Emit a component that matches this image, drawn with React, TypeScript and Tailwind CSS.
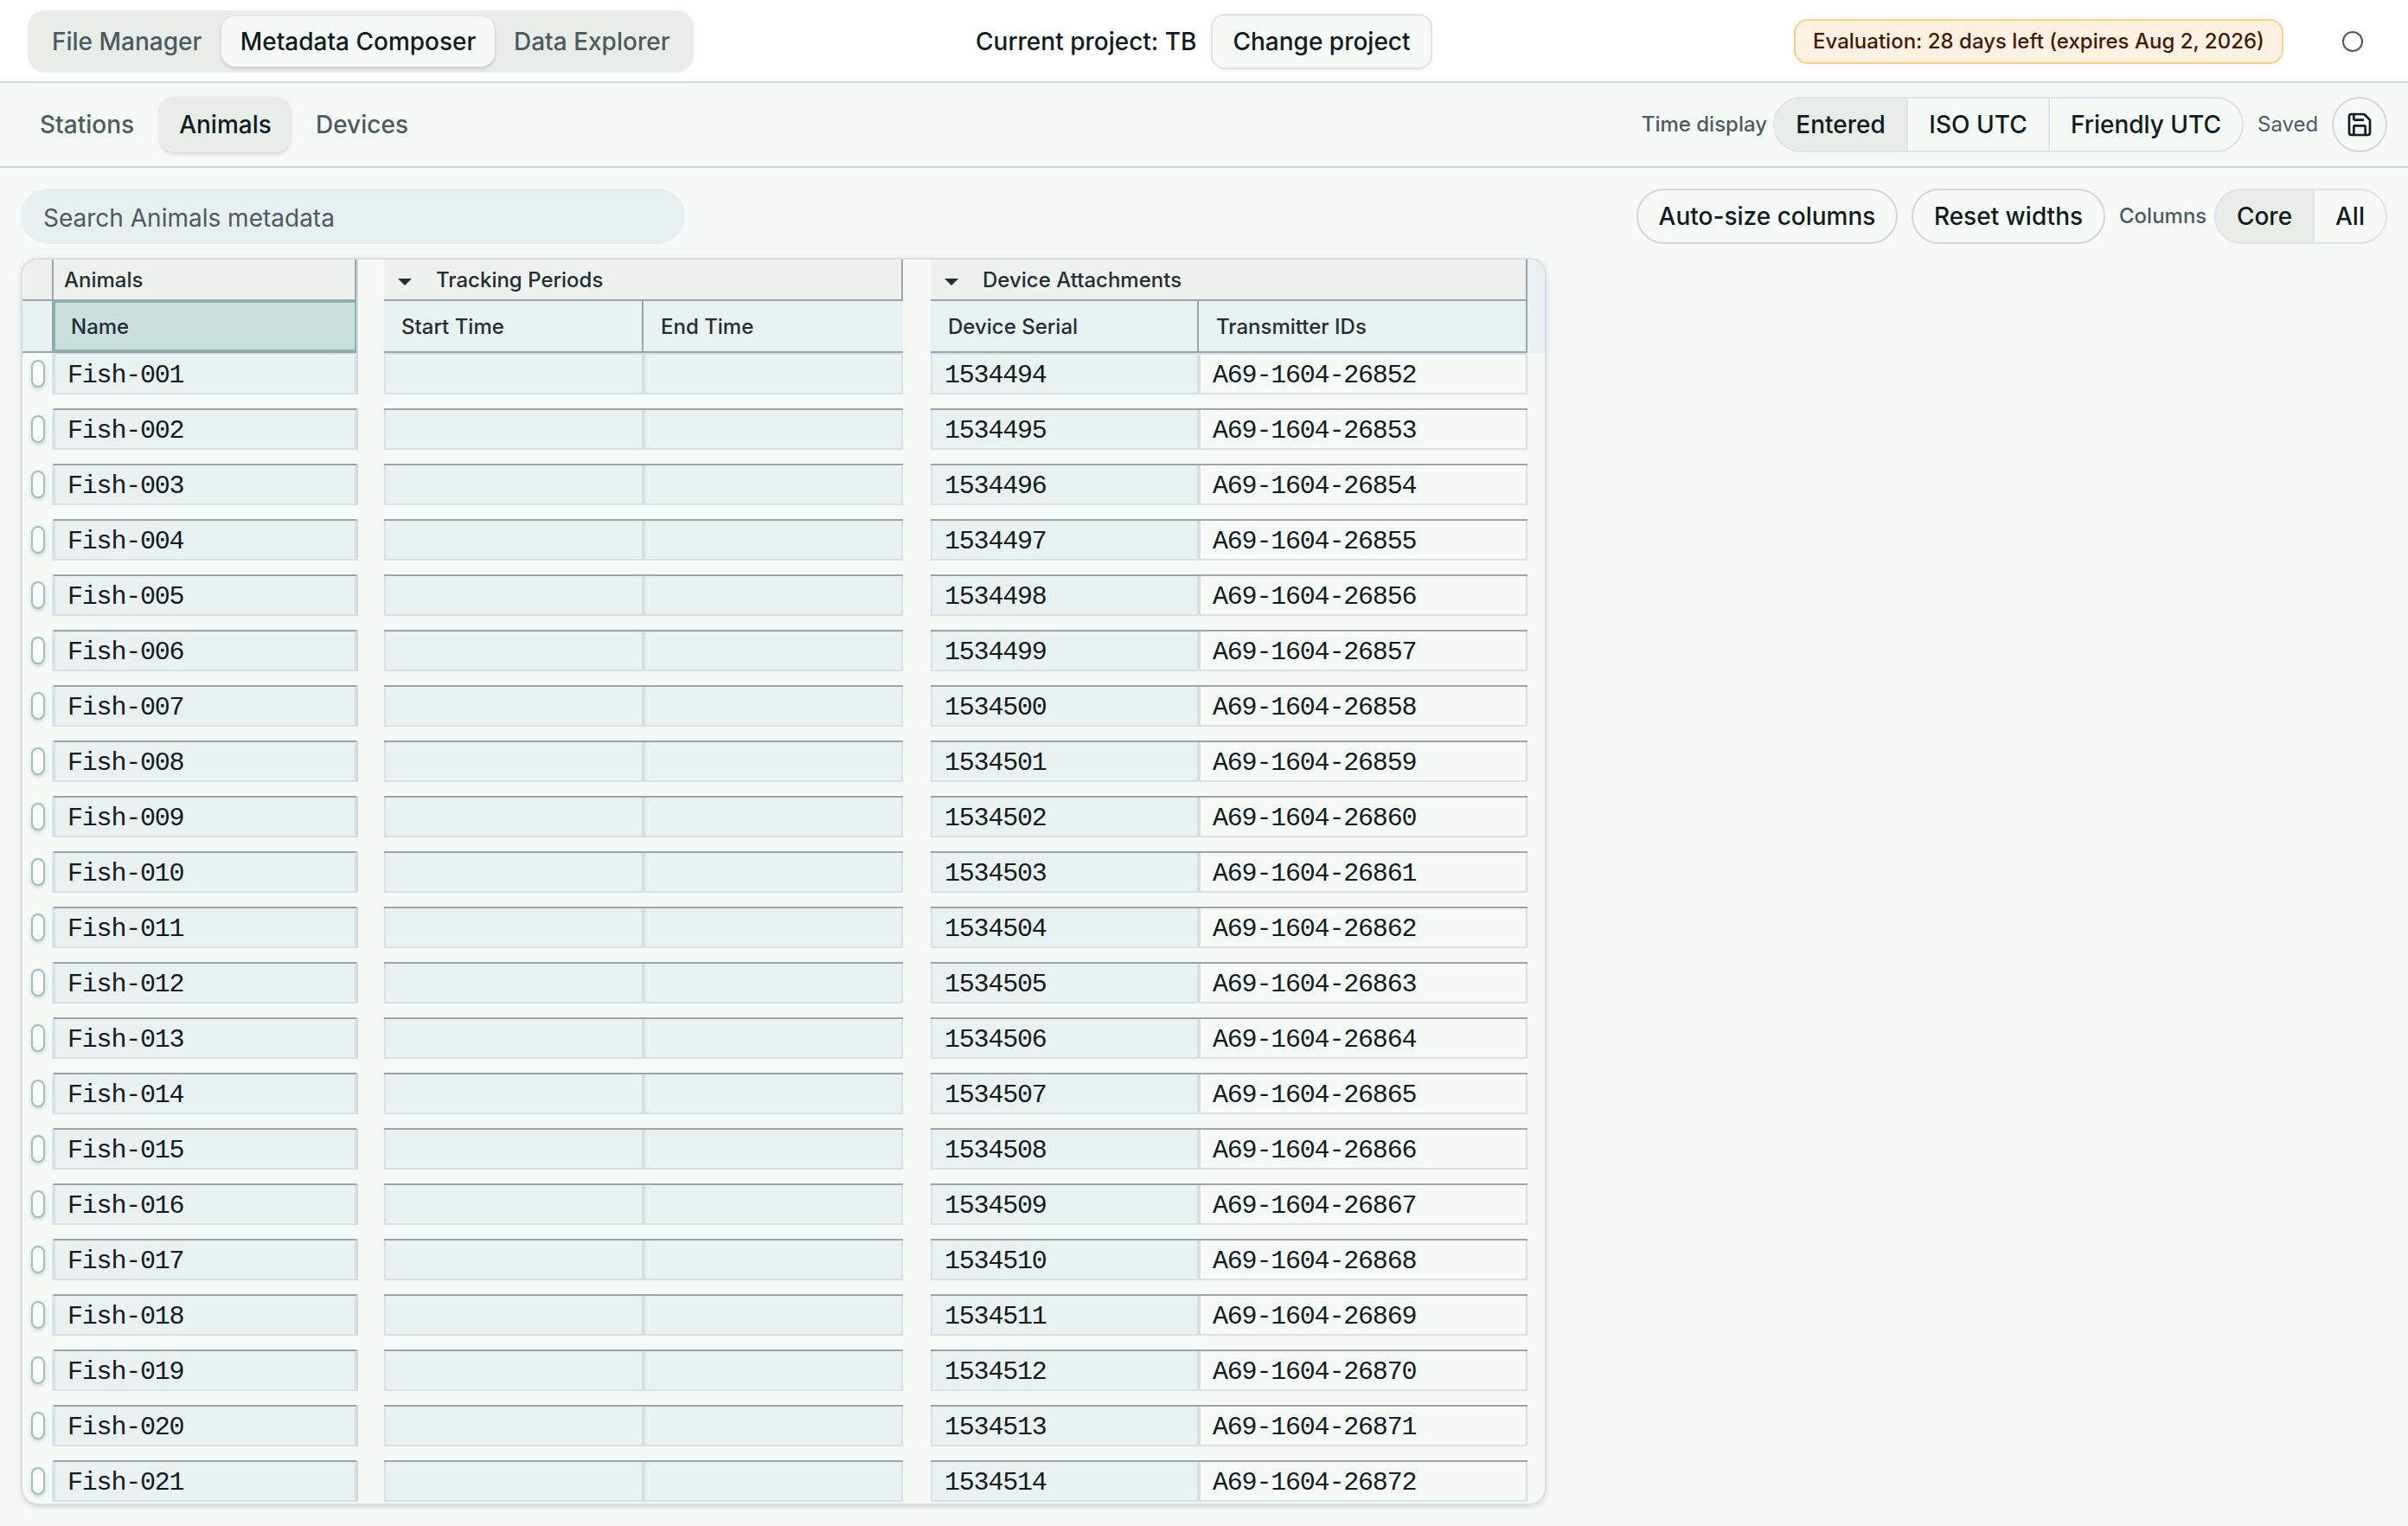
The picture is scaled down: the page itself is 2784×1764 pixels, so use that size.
import React from "react";
import { Save } from "lucide-react";

const rows = Array.from({ length: 21 }, (_, i) => ({
  name: `Fish-${String(i + 1).padStart(3, "0")}`,
  serial: String(1534494 + i),
  transmitter: `A69-1604-${26852 + i}`,
}));

function Cell({ first, plain, width, children }: { first: boolean; plain?: boolean; width: string; children?: React.ReactNode }) {
  return (
    <div className={`flex h-12 shrink-0 flex-col border-t-2 ${width} ${first ? "border-[#d6e0e6]" : "border-[#9ba4aa]"}`}>
      <div className={`flex flex-1 items-center border-x-2 border-b-2 border-[#d6e0e6] pt-[3px] pl-3.5 leading-none ${plain ? "" : "bg-[#e9f1f1]"}`}>
        {children}
      </div>
    </div>
  );
}

function Row({ row, first }: { row: (typeof rows)[number]; first: boolean }) {
  return (
    <div className="flex h-12 shrink-0">
      <div className="flex w-9 shrink-0 items-center border-r-2 border-[#dbe4e8] pl-2.5">
        <span className="h-8 w-4 rounded-full border-2 border-[#9ac1c0] bg-[#fafdfa] shadow-[0_2px_4px_rgba(0,0,0,0.16)]" />
      </div>
      <Cell first={first} width="w-[350px]">{row.name}</Cell>
      <div className="w-8 shrink-0 border-l-2 border-[#cfd8df]" />
      <Cell first={first} width="w-[300px]" />
      <Cell first={first} width="w-[300px]" />
      <div className="w-8 shrink-0" />
      <Cell first={first} width="w-[310px]">{row.serial}</Cell>
      <Cell first={first} plain width="w-[380px]">{row.transmitter}</Cell>
    </div>
  );
}

function Caret() {
  return (
    <svg className="mt-1 h-2 w-4" viewBox="0 0 16 8" fill="#232e33">
      <path d="M0 0h16L8 8z" />
    </svg>
  );
}

function TableHeader() {
  return (
    <div className="h-[108px] shrink-0 text-2xl font-medium leading-none text-[#232e33]">
      <div className="flex h-12">
        <div className="w-9 shrink-0 border-r-2 border-b-2 border-[#9ba4aa] bg-[#edf2ee]" />
        <div className="flex w-[350px] shrink-0 items-center border-r-2 border-b-2 border-[#9ba4aa] bg-[#edf2ee] pt-0.5 pl-3">Animals</div>
        <div className="w-8 shrink-0 border-l-2 border-[#cfd8df]" />
        <div className="flex w-[600px] shrink-0 items-center gap-7 border-r-2 border-b-2 border-[#9ba4aa] bg-[#edf2ee] pt-0.5 pl-4">
          <Caret />
          Tracking Periods
        </div>
        <div className="w-8 shrink-0" />
        <div className="flex w-[690px] shrink-0 items-center gap-7 border-r-2 border-b-2 border-[#9ba4aa] bg-[#edf2ee] pt-0.5 pl-4">
          <Caret />
          Device Attachments
        </div>
        <div className="flex-1 bg-[#e9f2f2]" />
      </div>
      <div className="flex h-[60px]">
        <div className="w-9 shrink-0 border-r-2 border-b-2 border-[#9ba4aa] bg-[#e9f2f2]" />
        <div className="w-[350px] shrink-0 border-b-2 border-[#9ba4aa]">
          <div className="flex h-full items-center border-2 border-[#84b5b2] bg-[#cbdfde] pt-0.5 pl-[18px]">Name</div>
        </div>
        <div className="w-8 shrink-0 border-l-2 border-[#cfd8df]" />
        <div className="flex w-[300px] shrink-0 items-center border-r-2 border-b-2 border-[#9ba4aa] bg-[#e9f2f2] pt-0.5 pl-5">Start Time</div>
        <div className="flex w-[300px] shrink-0 items-center border-b-2 border-[#9ba4aa] bg-[#e9f2f2] pt-0.5 pl-5">End Time</div>
        <div className="w-8 shrink-0" />
        <div className="flex w-[310px] shrink-0 items-center border-r-2 border-b-2 border-[#9ba4aa] bg-[#e9f2f2] pt-0.5 pl-5">Device Serial</div>
        <div className="flex w-[380px] shrink-0 items-center border-r-2 border-b-2 border-[#9ba4aa] bg-[#e9f2f2] pt-0.5 pl-5">Transmitter IDs</div>
        <div className="flex-1 bg-[#e9f2f2]" />
      </div>
    </div>
  );
}

export default function App() {
  return (
    <div className="flex h-[1764px] w-[2784px] flex-col overflow-hidden bg-[#f6faf6] font-['Inter',sans-serif] text-[28px] font-medium leading-none whitespace-nowrap text-[#111b22]">
      <header className="grid h-24 shrink-0 grid-cols-[1fr_auto_1fr] items-center border-b-2 border-[#d0d8e0] bg-[#fefffe] pt-0.5 pr-[52px] pl-8">
        <nav className="flex h-[72px] w-[770px] items-center rounded-[20px] bg-[#e8ede7] text-[#4b5a63]">
          <span className="w-[224px] pl-7">File Manager</span>
          <span className="flex h-[58px] w-[316px] items-center justify-center rounded-2xl bg-[#f6faf6] text-[#111b22] shadow-[0_2px_4px_rgba(0,0,0,0.16)]">Metadata Composer</span>
          <span className="pl-[22px]">Data Explorer</span>
        </nav>
        <div className="flex items-center pl-5">
          <span className="w-[272px]">Current project: TB</span>
          <span className="flex h-16 w-64 items-center justify-center rounded-2xl border-2 border-[#dae4ea] bg-[#f6faf6] shadow-[0_2px_4px_rgba(0,0,0,0.05)]">Change project</span>
        </div>
        <div className="flex items-center justify-end">
          <span className="flex h-[52px] w-[566px] items-center justify-center rounded-2xl border-2 border-[#fccf87] bg-[#fdf2e2] text-2xl leading-none text-[#461901]">
            Evaluation: 28 days left (expires Aug 2, 2026)
          </span>
          <span className="ml-[68px] h-6 w-6 rounded-full border-2 border-[#4b5a63]" />
        </div>
      </header>

      <div className="flex h-[98px] shrink-0 items-center border-b-2 border-[#d0d8e0] px-6 text-[#4b5a63]">
        <span className="w-[161px] pl-[22px]">Stations</span>
        <span className="flex h-16 w-[151px] items-center justify-center rounded-2xl bg-[#e8ede7] text-[#111b22] shadow-[0_2px_4px_rgba(0,0,0,0.14)]">Animals</span>
        <span className="pl-[29px]">Devices</span>
        <div className="ml-auto flex items-center">
          <span className="text-2xl leading-none">Time display</span>
          <div className="ml-[7px] flex h-16 w-[544px] overflow-hidden rounded-full border-2 border-[#dae4ea] text-[#111b22]">
            <span className="flex w-[154px] items-center justify-center border-r-2 border-[#dae4ea] bg-[#e8ede7]">Entered</span>
            <span className="flex w-[164px] items-center justify-center border-r-2 border-[#dae4ea]">ISO UTC</span>
            <span className="flex flex-1 items-center justify-center">Friendly UTC</span>
          </div>
          <span className="ml-4 w-[86px] text-2xl font-normal leading-none">Saved</span>
          <span className="flex h-16 w-16 items-center justify-center rounded-full border-2 border-[#d0d8e0] text-[#111b22]">
            <Save size={32} strokeWidth={2} />
          </span>
        </div>
      </div>

      <div className="mt-6 flex h-16 shrink-0 items-center px-6">
        <div className="flex h-16 w-[768px] items-center rounded-full bg-[#e8efef] pt-1 pl-[26px] font-normal text-[#4b5a63]">Search Animals metadata</div>
        <div className="ml-auto flex items-center">
          <span className="flex h-16 w-[302px] items-center justify-center rounded-full border-2 border-[#d0d8e0]">Auto-size columns</span>
          <span className="ml-4 flex h-16 w-[224px] items-center justify-center rounded-full border-2 border-[#d0d8e0]">Reset widths</span>
          <span className="ml-4 w-[110px] text-2xl leading-none text-[#4b5a63]">Columns</span>
          <div className="flex h-16 w-[200px] overflow-hidden rounded-full border-2 border-[#dae4ea]">
            <span className="flex w-[114px] items-center justify-center border-r-2 border-[#dae4ea] bg-[#e8ede7]">Core</span>
            <span className="flex flex-1 items-center justify-center">All</span>
          </div>
        </div>
      </div>

      <main className="mt-4 ml-6 flex h-[1442px] w-[1764px] shrink-0 flex-col overflow-hidden rounded-[20px] border-2 border-[#d6e0e4] shadow-[0_2px_6px_rgba(0,0,0,0.13)]">
        <TableHeader />
        <div className="flex flex-col gap-4 font-['Liberation_Mono',monospace] text-[30px] font-normal leading-none tracking-[-1.2px]">
          {rows.map((row, i) => (
            <Row key={row.name} row={row} first={i === 0} />
          ))}
        </div>
      </main>
    </div>
  );
}
